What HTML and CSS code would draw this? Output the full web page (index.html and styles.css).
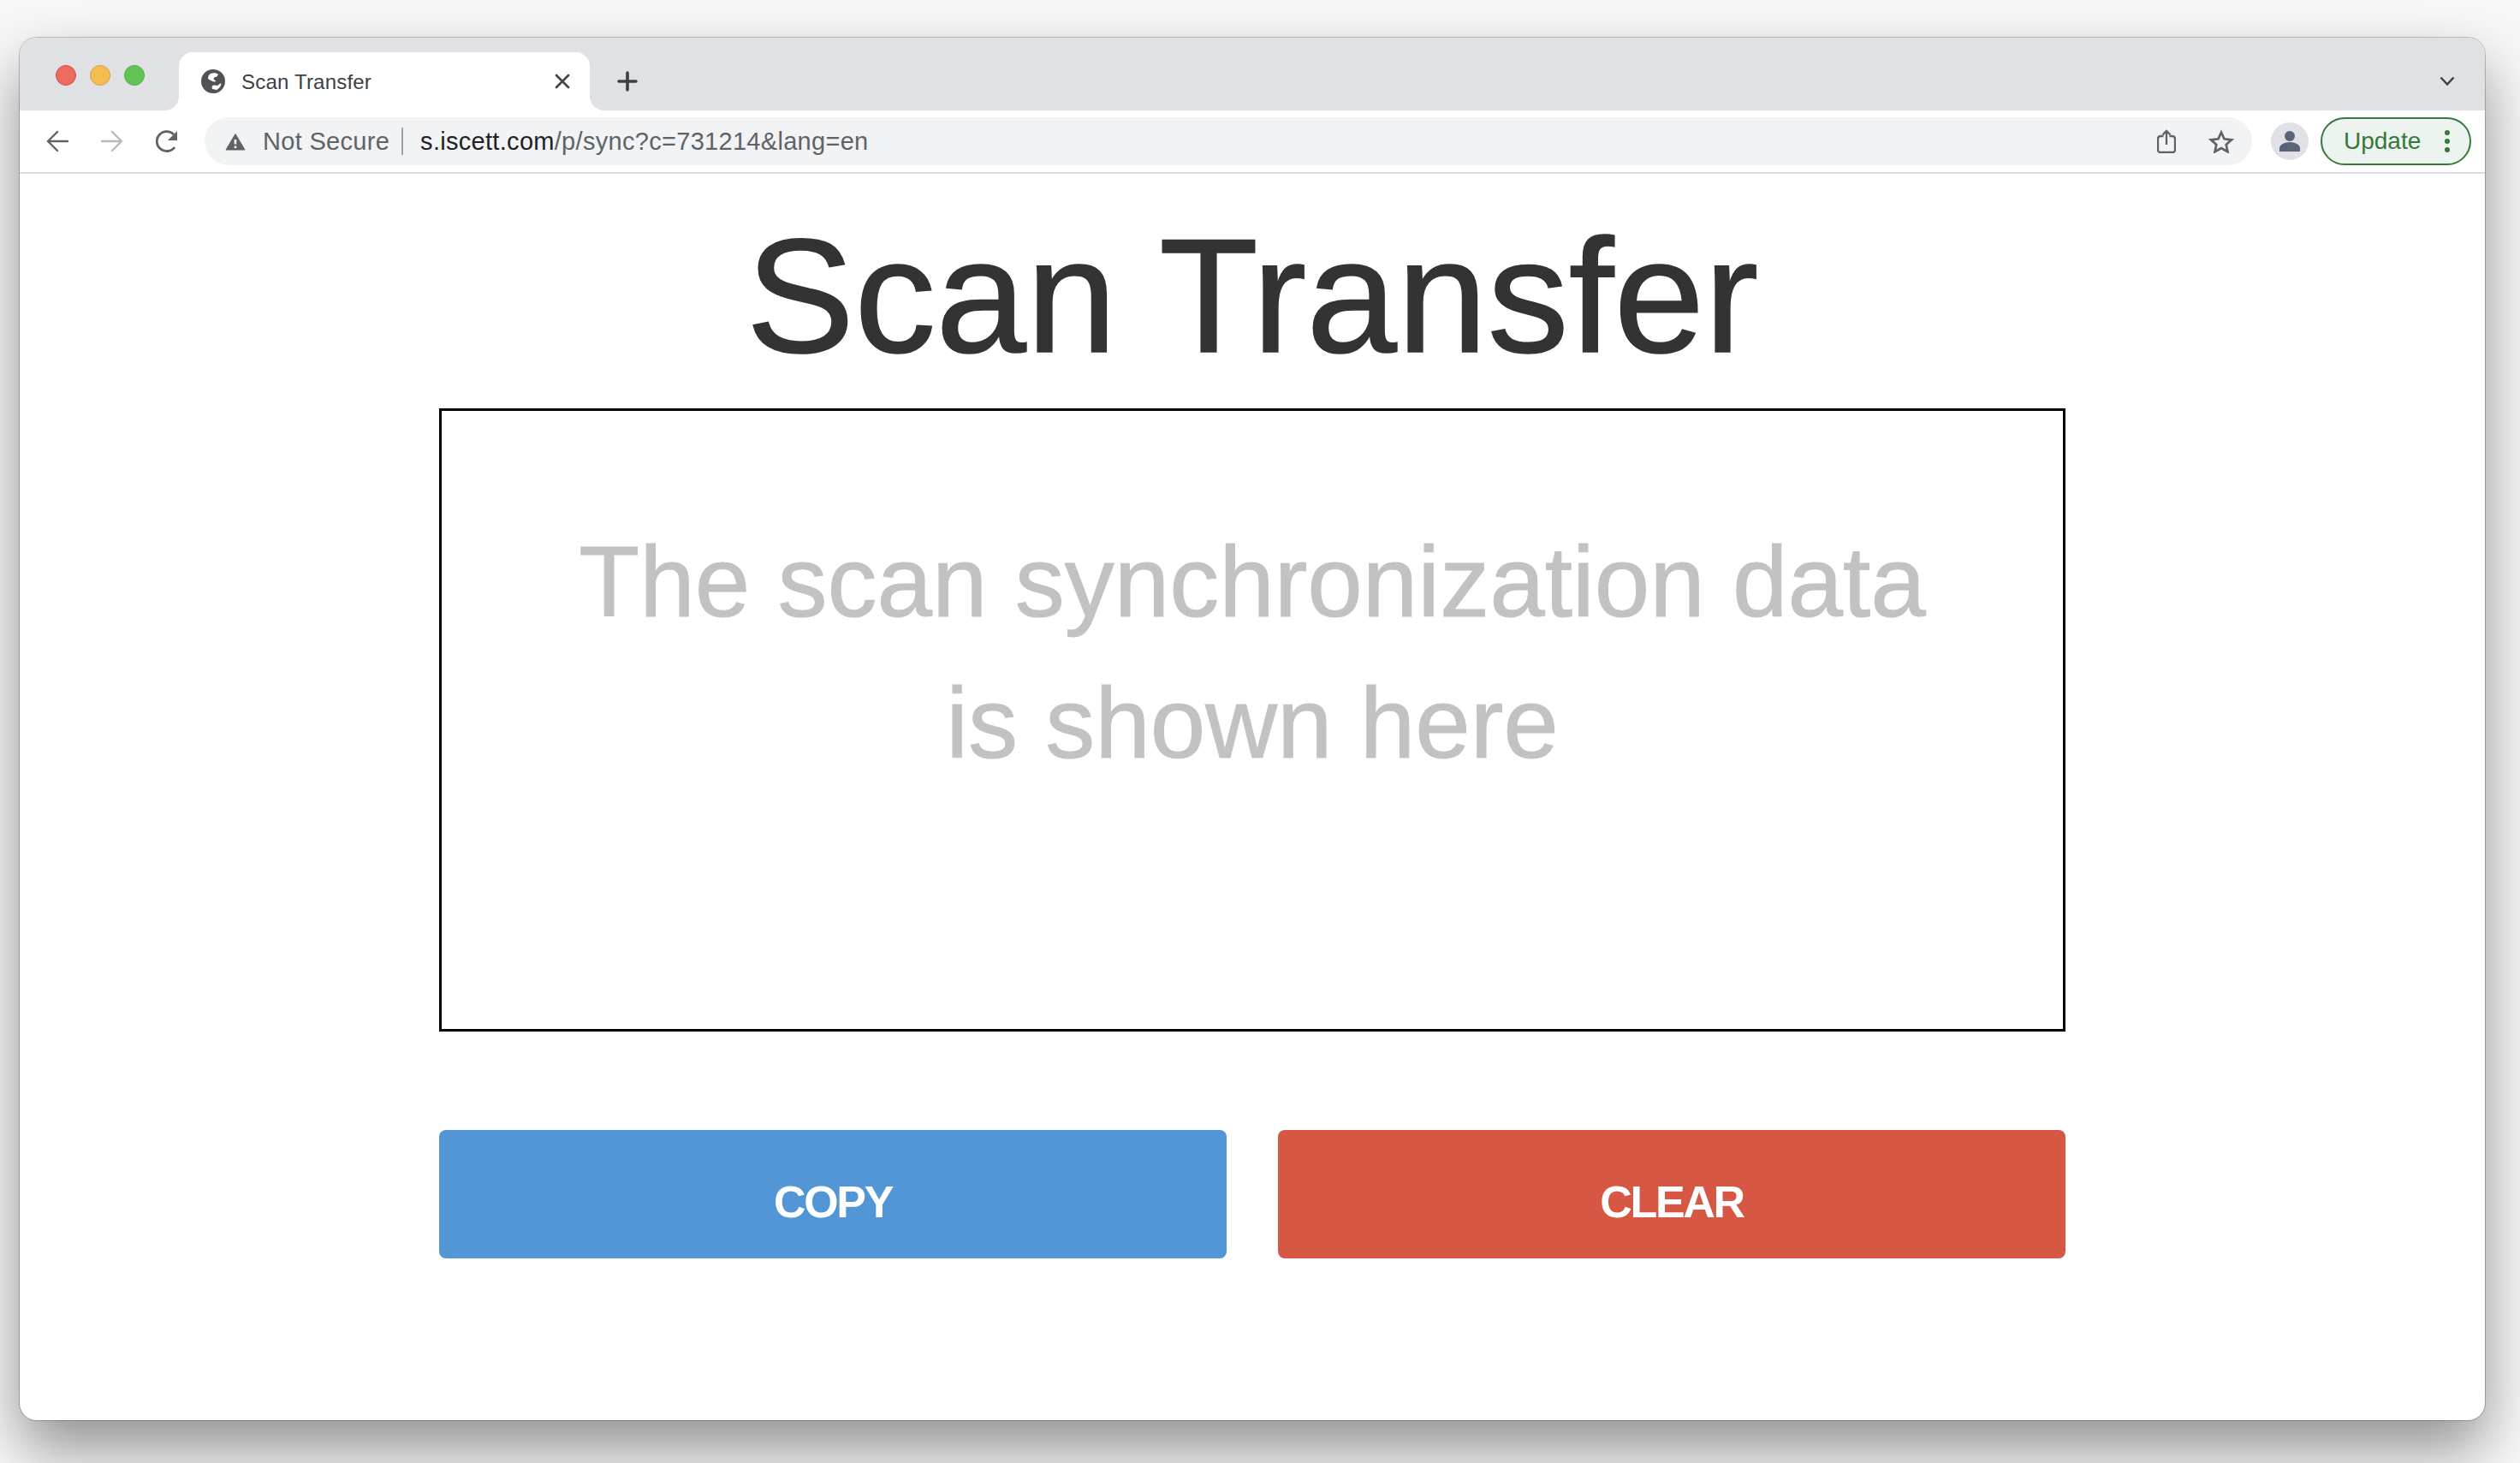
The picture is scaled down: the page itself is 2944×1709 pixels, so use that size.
FILE: index.html
```html
<!DOCTYPE html>
<html lang="en">
<head>
<meta charset="UTF-8">
<title>Scan Transfer</title>
<link rel="stylesheet" href="styles.css">
</head>
<body>
<div class="window">
    <div class="tabstrip">
        <div class="lights">
            <span class="light red"></span>
            <span class="light yellow"></span>
            <span class="light green"></span>
        </div>
        <div class="tab">
            <svg class="favicon" viewBox="0 0 28 28">
                <circle cx="14" cy="14" r="14" fill="#505257"/>
                <path d="M11 5C14 3.500 18 4 20 6L18 9C16 8 15 10 14.500 11.500L17.500 14C15 15.500 11 13 8 11C8 8 9 6 11 5zM23 16C24 18 22 22 18 24L13 23C12 20 13 18 16 18.500L19 19z" fill="#fff"/>
            </svg>
            <span class="tab-title">Scan Transfer</span>
            <svg class="tab-close" viewBox="0 0 18 18">
                <path d="M2 2l14 14M16 2L2 16" stroke="#45474a" stroke-width="2.800" stroke-linecap="round" fill="none"/>
            </svg>
        </div>
        <svg class="new-tab" viewBox="0 0 24 24">
            <path d="M12 2v20M2 12h20" stroke="#3c4043" stroke-width="3.600" stroke-linecap="round" fill="none"/>
        </svg>
        <svg class="tab-search" viewBox="0 0 18 12">
            <path d="M1.500 1.500L9 9.500l7.500-8" stroke="#3c4043" stroke-width="2.400" fill="none"/>
        </svg>
    </div>
    <div class="toolbar">
        <svg class="nav-icon back" viewBox="0 0 26 26">
            <path d="M25 13H2M13 2L2 13l11 11" stroke="#5f6368" stroke-width="2.400" stroke-linecap="round" stroke-linejoin="round" fill="none"/>
        </svg>
        <svg class="nav-icon forward" viewBox="0 0 26 26">
            <path d="M1 13h23M13 2l11 11-11 11" stroke="#b8babc" stroke-width="2.400" stroke-linecap="round" stroke-linejoin="round" fill="none"/>
        </svg>
        <svg class="nav-icon reload" viewBox="0 0 28 28">
            <path d="M23 21a11.500 11.500 0 1 1-1-15" stroke="#5f6368" stroke-width="2.800" fill="none"/>
            <path d="M26 2v11H15z" fill="#5f6368"/>
        </svg>
        <div class="omnibox">
            <svg class="warn" viewBox="0 0 24 21">
                <path d="M12 1.500L23 20H1z" fill="#5f6368" stroke="#5f6368" stroke-linejoin="round"/>
                <path d="M12 8v5.500M12 15.500v2.500" stroke="#f1f3f4" stroke-width="2.600"/>
            </svg>
            <span class="not-secure">Not Secure</span>
            <span class="omni-sep"></span>
            <span class="url"><span class="url-host">s.iscett.com</span>/p/sync?c=731214&amp;lang=en</span>
            <svg class="share" viewBox="0 0 22 28">
                <path d="M7.500 8H4a3 3 0 0 0-3 3v13a3 3 0 0 0 3 3h14a3 3 0 0 0 3-3V11a3 3 0 0 0-3-3h-3.500" stroke="#5f6368" stroke-width="2.300" fill="none"/>
                <path d="M11 18V2M6.500 6.500L11 2l4.500 4.500" stroke="#5f6368" stroke-width="2.300" fill="none"/>
            </svg>
            <svg class="star" viewBox="0 0 30 28">
                <path d="M15 3.500l3.500 7.800 8.500 1-6.300 5.700 1.800 8.300L15 22.100l-7.500 4.200 1.800-8.300-6.300-5.700 8.500-1z" stroke="#5f6368" stroke-width="2.700" fill="none"/>
            </svg>
        </div>
        <div class="avatar">
            <svg viewBox="0 0 44 44">
                <circle cx="22" cy="16" r="6" fill="#5a6478"/>
                <path d="M10 34v-4c0-4 6-7 12-7s12 3 12 7v4z" fill="#5a6478"/>
            </svg>
        </div>
        <div class="update">
            <span class="update-label">Update</span>
            <span class="update-dots"><i></i><i></i><i></i></span>
        </div>
    </div>
    <div class="page">
        <h1 class="title">Scan Transfer</h1>
        <div class="sync-box">The scan synchronization data<br>is shown here</div>
        <div class="actions">
            <button class="btn copy">COPY</button>
            <button class="btn clear">CLEAR</button>
        </div>
    </div>
</div>
</body>
</html>
```

FILE: styles.css
```css
body {
    margin: 0;
    height: 1709px;
    overflow: hidden;
    background: #f8f8f8;
    font-family: "Liberation Sans", Arial, sans-serif;
    padding: 44px 41px 0 23px;
    box-sizing: border-box;
}

.window {
    height: 1615px;
    background: #fff;
    border-radius: 20px;
    display: flex;
    flex-direction: column;
    box-shadow: 0 0 0 1px rgba(0, 0, 0, 0.22), 0 34px 70px rgba(0, 0, 0, 0.42);
}

.tabstrip {
    height: 85px;
    flex: none;
    background: #dfe1e5;
    border-radius: 20px 20px 0 0;
    display: flex;
    align-items: flex-end;
}

.lights {
    display: flex;
    gap: 16px;
    padding: 0 0 29px 42px;
    width: 186px;
    box-sizing: border-box;
    align-items: center;
    flex: none;
}

.light {
    width: 24px;
    height: 24px;
    border-radius: 50%;
    box-sizing: border-box;
    flex: none;
}

.red { background: #ee6a5f; border: 1px solid #ce5347; }
.yellow { background: #f5bd4f; border: 1px solid #d6a243; }
.green { background: #61c454; border: 1px solid #58a942; }

.tab {
    position: relative;
    width: 480px;
    height: 68px;
    background: #fff;
    border-radius: 16px 16px 0 0;
    display: flex;
    align-items: center;
    padding: 0 26px;
    box-sizing: border-box;
    flex: none;
}

/* the two concave feet of the active tab */
.tab::before,
.tab::after {
    content: "";
    position: absolute;
    bottom: 0;
    width: 16px;
    height: 16px;
}

.tab::before {
    left: -16px;
    background: radial-gradient(circle at 0 0, transparent 15.500px, #fff 16px);
}

.tab::after {
    right: -16px;
    background: radial-gradient(circle at 100% 0, transparent 15.500px, #fff 16px);
}

.favicon {
    width: 28px;
    height: 28px;
    flex: none;
}

.tab-title {
    font-size: 24px;
    letter-spacing: 0.2px;
    color: #3c4043;
    margin-left: 19px;
    flex: 1;
    padding-top: 1px;
}

.tab-close {
    width: 18px;
    height: 18px;
    flex: none;
    margin-right: -3px;
}

.new-tab {
    width: 24px;
    height: 24px;
    margin: 0 0 22px 32px;
    flex: none;
}

.tab-search {
    width: 18px;
    height: 12px;
    margin: 0 35px 28px auto;
    flex: none;
}

.toolbar {
    height: 72px;
    flex: none;
    display: flex;
    align-items: center;
    border-bottom: 2px solid #dadce0;
}

.nav-icon {
    width: 26px;
    height: 26px;
    flex: none;
}

.back { margin-left: 31px; }
.forward { margin-left: 38px; }
.reload { margin-left: 37px; width: 28px; height: 28px; }

.omnibox {
    width: 2392px;
    height: 56px;
    margin-left: 30px;
    background: #f1f3f4;
    border-radius: 28px;
    display: flex;
    align-items: center;
    box-sizing: border-box;
    flex: none;
}

.warn {
    width: 24px;
    height: 21px;
    margin-left: 24px;
    flex: none;
}

.not-secure {
    font-size: 29px;
    letter-spacing: 0.3px;
    color: #5f6368;
    margin-left: 20px;
}

.omni-sep {
    width: 2px;
    height: 32px;
    background: #9aa0a6;
    margin: 0 20px 0 14px;
}

.url {
    font-size: 29px;
    letter-spacing: 0.3px;
    color: #5f6368;
    flex: 1;
}

.url-host {
    color: #202124;
}

.share {
    width: 22px;
    height: 28px;
    flex: none;
}

.star {
    width: 30px;
    height: 28px;
    margin: 0 21px 0 38px;
    flex: none;
}

.avatar {
    width: 44px;
    height: 44px;
    border-radius: 50%;
    background: #dfe1e5;
    margin-left: 22px;
    flex: none;
}

.avatar svg {
    display: block;
}

.update {
    width: 176px;
    height: 56px;
    margin-left: 14px;
    box-sizing: border-box;
    border: 2px solid #35793c;
    border-radius: 28px;
    background: #edf3ef;
    display: flex;
    align-items: center;
    flex: none;
    padding-left: 25px;
}

.update-label {
    font-size: 28px;
    color: #35793c;
    flex: 1;
}

.update-dots {
    display: flex;
    flex-direction: column;
    gap: 4px;
    margin-right: 23px;
}

.update-dots i {
    width: 6px;
    height: 6px;
    border-radius: 50%;
    background: #35793c;
}

.page {
    flex: 1;
    display: flex;
    flex-direction: column;
    align-items: center;
}

.title {
    margin: 0;
    height: 274px;
    font-size: 190px;
    font-weight: normal;
    line-height: 284px;
    color: #333;
    -webkit-text-stroke: 1.5px #333;
}

.sync-box {
    width: 1900px;
    height: 728px;
    box-sizing: border-box;
    border: 3px solid #000;
    padding-top: 118px;
    font-size: 116px;
    line-height: 165px;
    text-align: center;
    color: #c2c2c2;
    -webkit-text-stroke: 1px #c2c2c2;
}

.actions {
    width: 1900px;
    display: flex;
    gap: 60px;
    margin-top: 115px;
}

.btn {
    flex: 1;
    height: 150px;
    border: none;
    border-radius: 8px;
    color: #fff;
    font-family: "Liberation Sans", Arial, sans-serif;
    font-size: 52px;
    font-weight: bold;
    letter-spacing: -2.300px;
    padding: 18px 0 0;
}

.copy { background: #5296d5; }
.clear { background: #d75745; }
```
